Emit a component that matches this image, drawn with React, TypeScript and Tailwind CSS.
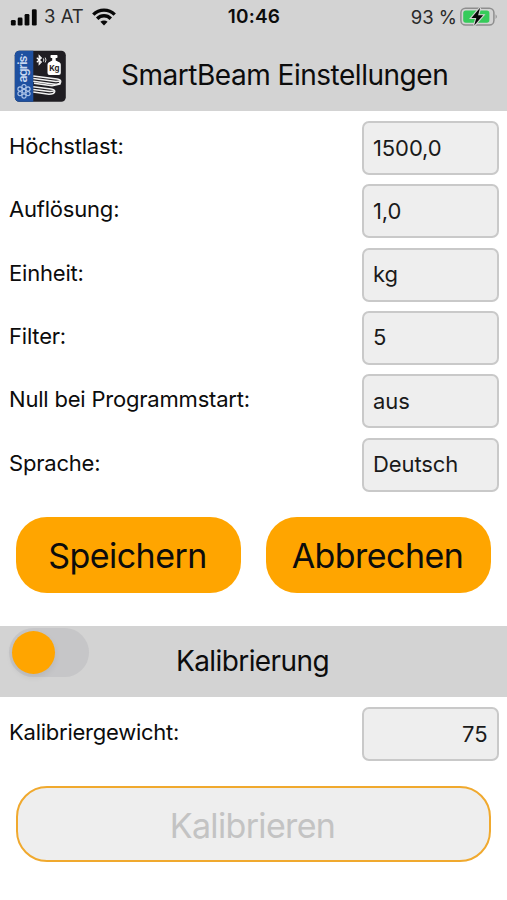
const settings = [
  { label: 'Höchstlast:', value: '1500,0' },
  { label: 'Auflösung:', value: '1,0' },
  { label: 'Einheit:', value: 'kg' },
  { label: 'Filter:', value: '5' },
  { label: 'Null bei Programmstart:', value: 'aus' },
  { label: 'Sprache:', value: 'Deutsch' },
];

function SignalIcon() {
  return (
    <svg width="27" height="17" viewBox="0 0 27 17" fill="#080808">
      <rect x="0.9" y="11" width="4.8" height="5.6" rx="1.3" />
      <rect x="7.7" y="8.6" width="4.8" height="8" rx="1.3" />
      <rect x="14.6" y="5" width="4.8" height="11.6" rx="1.3" />
      <rect x="21.9" y="0.2" width="4.8" height="16.4" rx="1.3" />
    </svg>
  );
}

function WifiIcon() {
  return (
    <svg width="24" height="18" viewBox="0 0 24 18" fill="none" stroke="#080808" strokeWidth="3.4">
      <path d="M1.3 6.6C7.3 .6 16.7 .6 22.7 6.6" />
      <path d="M5.2 10.7C9 6.8 15 6.8 18.8 10.7" />
      <path d="M12 17.4 8.4 13.8C10.5 12 13.5 12 15.6 13.8Z" fill="#080808" stroke="none" />
    </svg>
  );
}

function BatteryIcon() {
  return (
    <svg width="38" height="20" viewBox="0 0 38 20">
      <rect x="0.9" y="1.2" width="33" height="16.8" rx="4.6" fill="none" stroke="#8e8e8e" strokeWidth="1.5" />
      <path d="M35.6 7.2Q38 9.6 35.6 12Z" fill="#8e8e8e" />
      <rect x="3.2" y="3.5" width="26.2" height="12.2" rx="2.6" fill="#35cb5a" />
      <path
        d="M20.1 .8 11.4 11H16.3L14.2 18.6 23.1 8.3H18.1Z"
        fill="#080808"
        stroke="#d3d3d3"
        strokeWidth="2.2"
        paintOrder="stroke"
      />
    </svg>
  );
}

function AppLogo() {
  return (
    <svg width="52" height="52" viewBox="0 0 52 52">
      <clipPath id="logoClip">
        <rect x="0.8" y="0.7" width="51" height="51" rx="4.5" />
      </clipPath>
      <g clipPath="url(#logoClip)">
        <rect width="52" height="52" fill="#1f1d22" />
        <rect width="19.3" height="52" fill="#1e50a0" />
        <text
          transform="translate(13.4 32.5) rotate(-90)"
          fill="#c9d8f0"
          fontSize="12.5"
          fontWeight="600"
          textLength="27"
          className="font-['Inter',sans-serif]"
        >
          agris
        </text>
        <circle cx="8" cy="4.6" r="0.8" fill="#c9d8f0" />
        <g fill="none" stroke="#aec5e8" strokeWidth="1.1">
          <circle cx="10" cy="41.2" r="1.8" />
          <circle cx="10" cy="36.6" r="2.1" />
          <circle cx="14" cy="39" r="2.1" />
          <circle cx="14" cy="43.6" r="2.1" />
          <circle cx="10" cy="46" r="2.1" />
          <circle cx="6" cy="43.6" r="2.1" />
          <circle cx="6" cy="39" r="2.1" />
        </g>
        <path d="M22.8 7.8 27.3 12 25.2 14.2V5.8L27.3 8 22.8 12.2" fill="none" stroke="#fff" strokeWidth="1.2" />
        <path d="M29.3 8.4Q30.4 10 29.3 11.7M31.2 7.6Q32.8 10 31.2 12.5" fill="none" stroke="#ddd" strokeWidth="1" />
        <rect x="36.5" y="5" width="7" height="3" rx="0.8" fill="#fff" />
        <path d="M38.2 7.6H41.7V10.6L45.8 12.4Q46.8 13 46.8 14.8V23Q46.8 25 44.8 25H35.5Q33.5 25 33.5 23V14.8Q33.5 13 34.6 12.4L38.2 10.6Z" fill="#fff" />
        <text x="35.2" y="20.8" fontSize="7.8" fontWeight="700" fill="#1f1d22" className="font-['Inter',sans-serif]">
          Kg
        </text>
        <g fill="none" stroke="#f1f1f1" strokeWidth="1.5" strokeLinejoin="round">
          <path d="M19.3 26 43 29.1Q47 29.7 46.7 31.9 46 34 41 34.3L19.3 31.2" />
          <path d="M19.3 28.6 42 31.5 46 30.9M20 33.2 38 35.7 46 34.1V31.7" />
          <path d="M19.3 36.7 37 39Q41 39.7 40.7 41.7 40 44.1 35 44.2L19.3 42.1" />
          <path d="M19.3 39.4 36 41.5 40 40.9" />
        </g>
      </g>
    </svg>
  );
}

function ValueBox({ value, alignRight = false }: { value: string; alignRight?: boolean }) {
  return (
    <div
      className={`flex h-[54px] w-[137.5px] shrink-0 items-center rounded-[7px] border-2 border-[#c9c9c9] bg-[#eeeeee] px-[9.5px] text-[22px] tracking-[-0.1px] text-[#1a1a1a] ${
        alignRight ? 'justify-end' : ''
      }`}
    >
      {value}
    </div>
  );
}

export default function App() {
  return (
    <div className="flex h-[900px] w-[507px] flex-col overflow-hidden bg-white font-['Inter','Liberation_Sans',sans-serif] text-[#0c0c0c]">
      <header className="h-[111px] shrink-0 bg-[#d3d3d3]">
        <div className="grid h-[34px] grid-cols-[1fr_auto_1fr] items-center pr-[9px] pl-[10px] text-[18.5px]">
          <div className="flex items-center">
            <SignalIcon />
            <span className="ml-[7px] text-[#2a2a2a]">3 AT</span>
            <span className="ml-[8px]">
              <WifiIcon />
            </span>
          </div>
          <span className="pt-px text-[19px] font-semibold tracking-[0.2px]">10:46</span>
          <div className="flex items-center justify-end gap-[3px]">
            <span className="pt-px text-[#2a2a2a]">93 %</span>
            <BatteryIcon />
          </div>
        </div>
        <div className="flex items-center pt-[16px] pl-[14px]">
          <AppLogo />
          <h1 className="ml-[55px] pb-[2px] text-[28px] leading-[34px] tracking-[-0.48px] whitespace-nowrap">
            SmartBeam Einstellungen
          </h1>
        </div>
      </header>

      <main className="flex flex-col">
        <section className="flex h-[390px] flex-col pt-[10px]">
          {settings.map((s) => (
            <div key={s.label} className="flex h-[63.4px] items-start justify-between pr-[8px] pl-[9px]">
              <span className="pt-[9px] text-[22px] leading-[32px] tracking-[-0.2px]">{s.label}</span>
              <ValueBox value={s.value} />
            </div>
          ))}
        </section>

        <div className="flex h-[125px] items-start justify-between px-[16px] pt-[16px]">
          <button className="h-[76px] w-[225px] rounded-[31px] bg-[#ffa500] pt-px pr-[2px] text-[34px] tracking-[-0.55px]">
            Speichern
          </button>
          <button className="h-[76px] w-[225px] rounded-[31px] bg-[#ffa500] pt-px pr-[2px] text-[34px] tracking-[-0.55px]">
            Abbrechen
          </button>
        </div>

        <section className="grid h-[71px] grid-cols-[1fr_auto_1fr] bg-[#d3d3d3]">
          <div className="mt-[2px] ml-[9px] flex h-[49px] w-[80px] items-center rounded-full bg-[#c6c6c8] pl-[3px]">
            <div className="h-[43px] w-[43px] rounded-full bg-[#ffa500] shadow-[0_3px_6px_rgba(0,0,0,0.08)]" />
          </div>
          <h2 className="self-center pr-[2px] pb-[2px] text-[28px] tracking-[-0.6px]">Kalibrierung</h2>
          <div />
        </section>

        <div className="flex h-[89px] items-start justify-between pt-[10px] pr-[8px] pl-[9px]">
          <span className="pt-[9px] text-[22px] leading-[32px] tracking-[-0.25px]">Kalibriergewicht:</span>
          <ValueBox value="75" alignRight />
        </div>

        <button className="mx-[16px] h-[76px] rounded-[31px] border-2 border-[#f0a92e] bg-[#eeeeee] pt-[2px] pr-[2px] text-[34px] tracking-[-0.65px] text-[#c3c3c3]">
          Kalibrieren
        </button>
      </main>
    </div>
  );
}
